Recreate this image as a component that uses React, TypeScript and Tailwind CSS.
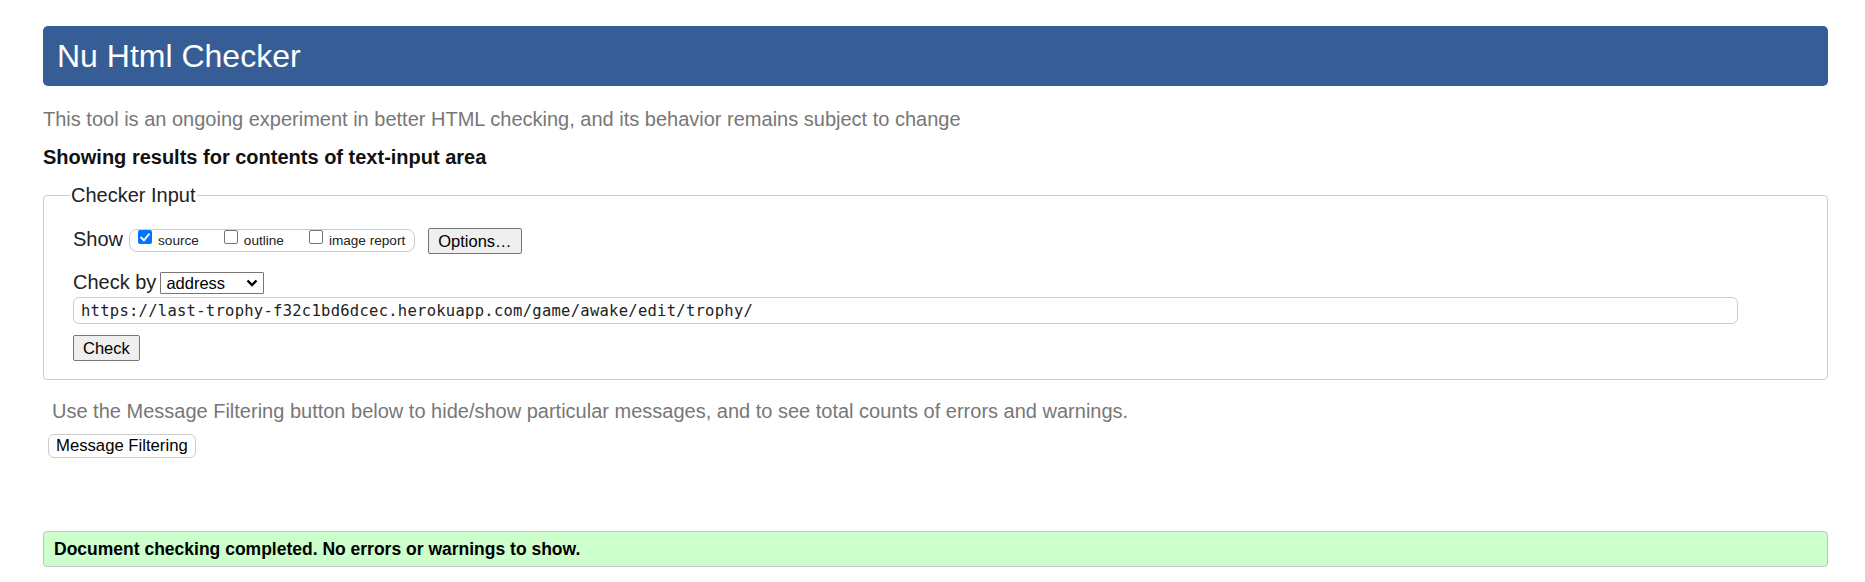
import React from "react";

function Box({ checked }: { checked: boolean }) {
  if (checked) {
    return (
      <span className="flex h-[14px] w-[14px] shrink-0 items-center justify-center rounded-[2px] bg-[#0075ff]">
        <svg width="10" height="9" viewBox="0 0 10 9">
          <path d="M1.2 4.6 L3.9 7.3 L8.8 1.4" fill="none" stroke="#fff" strokeWidth="2" strokeLinecap="square" />
        </svg>
      </span>
    );
  }
  return <span className="h-[14px] w-[14px] shrink-0 rounded-[2px] border border-[#767676] bg-white" />;
}

function Opt({ checked, label, first }: { checked: boolean; label: string; first?: boolean }) {
  return (
    <label className={`flex items-start ${first ? "" : "ml-[25px]"}`}>
      <Box checked={checked} />
      <span className="ml-[6px] mt-[3px] text-[13.6px] leading-[16px] text-[#222]">{label}</span>
    </label>
  );
}

export default function App() {
  return (
    <div className="min-h-[582px] bg-white pl-[43px] pr-[37px] pt-[26px] font-['Liberation_Sans',Arial,sans-serif] text-[#222]">
      <header className="flex h-[60px] items-center rounded-[5px] bg-[#365d95] pl-[14px]">
        <h1 className="text-[32px] leading-[32px] font-normal text-white">Nu Html Checker</h1>
      </header>

      <p className="mt-[21px] text-[20px] leading-[24px] text-[#777]">
        This tool is an ongoing experiment in better HTML checking, and its behavior remains subject to change
      </p>

      <h2 className="mt-[14px] text-[20px] leading-[24px] font-bold text-[#111]">
        Showing results for contents of text-input area
      </h2>

      <fieldset className="mt-[14px] rounded-[4px] border border-[#ccc] pl-[29px] pt-[20px] pb-[18px]">
        <legend className="-ml-[3px] px-[1px] text-[20px] leading-[24px] text-[#222]">Checker Input</legend>

        <div className="flex items-start">
          <span className="text-[20px] leading-[24px]">Show</span>
          <div className="ml-[6px] mt-[2px] flex h-[23px] items-start rounded-[8px] border border-[#ccc] pl-[8px] pr-[9px]">
            <Opt checked first label="source" />
            <Opt checked={false} label="outline" />
            <Opt checked={false} label="image report" />
          </div>
          <button className="ml-[13px] mt-[1px] h-[26px] rounded-[2px] border border-[#767676] bg-[#efefef] px-[9px] text-[16.5px] leading-[18px] text-black">
            Options…
          </button>
        </div>

        <div className="mt-[16px] flex items-start">
          <span className="text-[20px] leading-[24px]">Check by</span>
          <div className="ml-[4px] mt-[2px] flex h-[22px] w-[104px] items-center justify-between rounded-[1px] border border-[#767676] bg-white pl-[5px] pr-[5px]">
            <span className="text-[16.5px] leading-[18px] text-black">address</span>
            <svg width="12" height="8" viewBox="0 0 12 8">
              <path d="M1.5 1.5 L6 6 L10.5 1.5" fill="none" stroke="#000" strokeWidth="2.4" />
            </svg>
          </div>
        </div>

        <div className="mt-[3px] flex h-[27px] w-[1665px] items-center rounded-[6px] border border-[#ccc] bg-white pl-[7px]">
          <span className="font-['DejaVu_Sans_Mono',monospace] text-[15.5px] leading-[18px] tracking-[0.27px] text-[#222]">
            https://last-trophy-f32c1bd6dcec.herokuapp.com/game/awake/edit/trophy/
          </span>
        </div>

        <button className="mt-[11px] block h-[26px] rounded-[2px] border border-[#767676] bg-[#efefef] px-[9px] text-[16.5px] leading-[18px] text-black">
          Check
        </button>
      </fieldset>

      <p className="ml-[9px] mt-[19px] text-[20px] leading-[24px] text-[#777]">
        Use the Message Filtering button below to hide/show particular messages, and to see total counts of errors and warnings.
      </p>

      <button className="ml-[5px] mt-[11px] block h-[24px] rounded-[6px] border border-[#ccc] bg-white px-[7px] text-[16.7px] leading-[18px] text-black">
        Message Filtering
      </button>

      <div className="mt-[73px] flex h-[36px] items-center rounded-[4px] border border-[#c4c4c4] bg-[#ccffcc] pl-[10px]">
        <p className="text-[17.5px] leading-[20px] font-bold text-black">
          Document checking completed. No errors or warnings to show.
        </p>
      </div>
    </div>
  );
}
